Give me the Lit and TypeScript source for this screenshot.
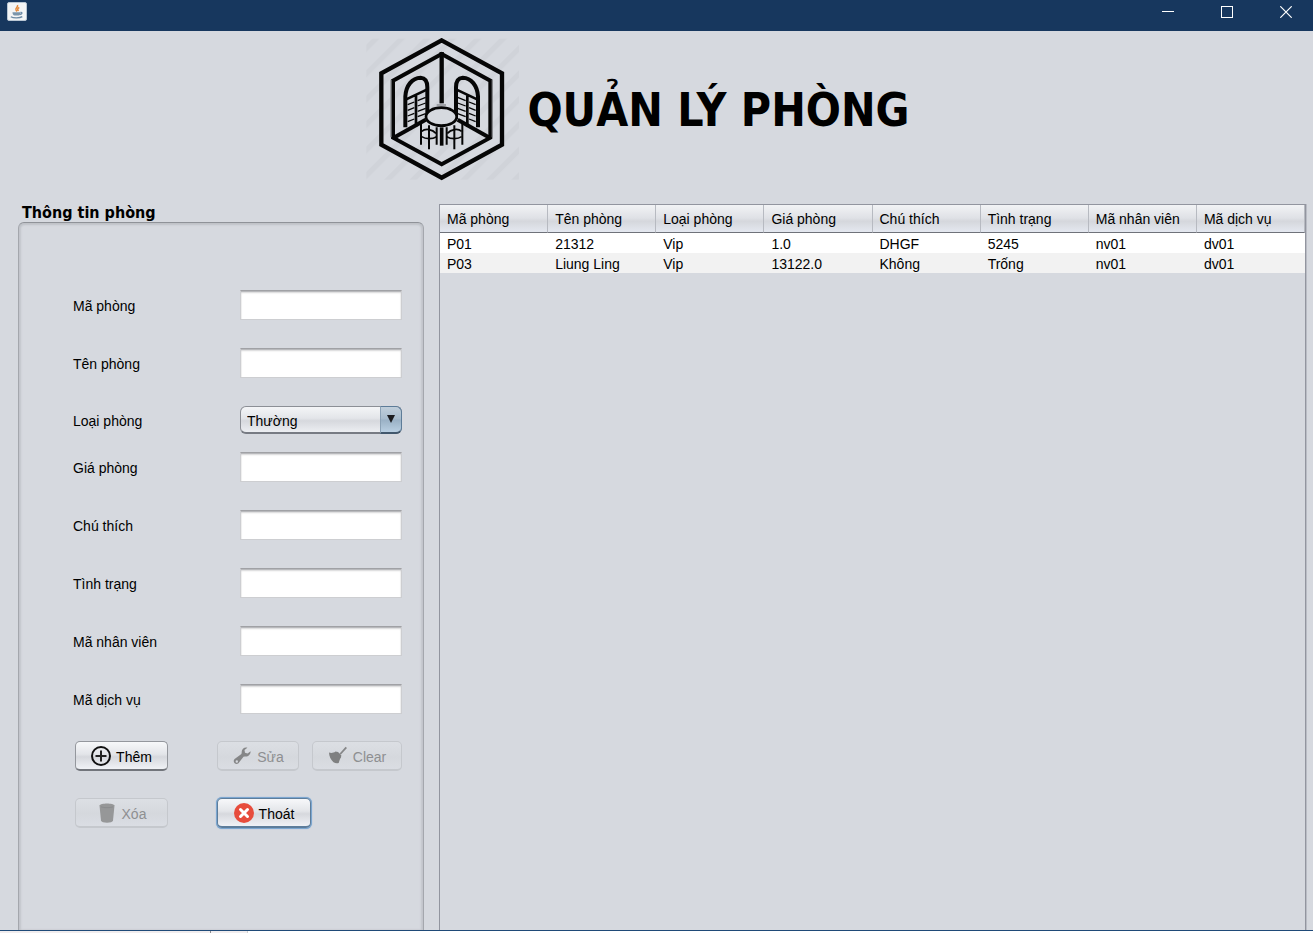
import { LitElement, html, css, svg } from "lit";
import { customElement, state } from "lit/decorators.js";

const FIELDS = [
  { id: "ma-phong", label: "Mã phòng", kind: "text" },
  { id: "ten-phong", label: "Tên phòng", kind: "text" },
  { id: "loai-phong", label: "Loại phòng", kind: "select" },
  { id: "gia-phong", label: "Giá phòng", kind: "text" },
  { id: "chu-thich", label: "Chú thích", kind: "text" },
  { id: "tinh-trang", label: "Tình trạng", kind: "text" },
  { id: "ma-nhan-vien", label: "Mã nhân viên", kind: "text" },
  { id: "ma-dich-vu", label: "Mã dịch vụ", kind: "text" },
];

const ROWS = [
  ["P01", "21312", "Vip", "1.0", "DHGF", "5245", "nv01", "dv01"],
  ["P03", "Liung Ling", "Vip", "13122.0", "Không", "Trống", "nv01", "dv01"],
];

@customElement("title-bar")
class TitleBar extends LitElement {
  static styles = css`
    :host {
      display: flex;
      align-items: flex-start;
      justify-content: space-between;
      height: 31px;
      background: #17375e;
    }
    .app-icon {
      display: block;
      width: 20px;
      height: 20px;
      margin: 2px 0 0 7px;
    }
    .controls {
      display: flex;
      gap: 5px;
    }
    .control {
      display: flex;
      align-items: center;
      justify-content: center;
      width: 54px;
      height: 24px;
      padding: 0;
      border: 0;
      background: none;
    }
    .control svg {
      display: block;
      width: 12px;
      height: 12px;
    }
  `;

  render() {
    return html`
      <svg class="app-icon" viewBox="0 0 20 20" aria-hidden="true">
        <rect x="0.5" y="0.5" width="19" height="18" rx="1.5" fill="#f4f5f6" stroke="#b9c6d3" />
        <path d="M10.500 3c1 2-2.500 3-1.500 5 .4.9 1 1.300 1 1.300M12.300 5.500c-2 1-2 2-.8 3.500" fill="none" stroke="#e58a3c" stroke-width="1.500" />
        <path d="M5.500 10.300h8c0 2-.8 3.200-1.800 3.200H7.500c-1.200 0-2-1.200-2-3.200Z" fill="#7b95ab" />
        <path d="M13.500 10.500c2-.5 2.200 1.500-.8 2.200M3.800 14.800c2.500 1.500 9 1.500 11.500-.2" fill="none" stroke="#6c8aa5" stroke-width="1.300" />
      </svg>
      <div class="controls">
        <button class="control" aria-label="Thu nhỏ">
          <svg viewBox="0 0 12 12"><path d="M0 5.500h12" stroke="#fff" /></svg>
        </button>
        <button class="control" aria-label="Phóng to">
          <svg viewBox="0 0 12 12"><rect x="0.5" y="0.5" width="11" height="11" fill="none" stroke="#fff" /></svg>
        </button>
        <button class="control" aria-label="Đóng">
          <svg viewBox="0 0 12 12"><path d="M.3.3l11.400 11.400M11.700.3L.3 11.700" stroke="#fff" stroke-width="1.200" /></svg>
        </button>
      </div>
    `;
  }
}

@customElement("room-logo")
class RoomLogo extends LitElement {
  static styles = css`
    :host {
      display: block;
    }
    .logo {
      display: block;
      width: 155px;
      height: 143px;
    }
  `;

  private window() {
    return svg`
      <path d="M151 290V197C153 165 171 142 197 141C212 142 217 155 217 170V265" stroke-width="12" />
      <path d="M152 207L217 176M183 190V288" stroke-width="8" />
      <path d="M158 222l20-8M158 239l20-8M158 256l20-8M158 273l20-8M188 210l24-10M188 226l24-9M188 242l24-9M188 258l24-9" stroke-width="4" />
      <path d="M116 321L212 267" stroke-width="12" />
      <path d="M198 272V342M222 284V356M245 290V342" stroke-width="6" />
      <path d="M200 302C212 292 232 296 243 308M200 318C212 326 232 326 245 318" stroke-width="5" />
    `;
  }

  render() {
    return html`
      <svg class="logo" viewBox="30 22 465 429" aria-hidden="true">
        <defs>
          <pattern id="stripes" width="54" height="54" patternUnits="userSpaceOnUse" patternTransform="translate(52 24) rotate(45)">
            <rect width="16" height="54" fill="#d0d3d9" />
          </pattern>
        </defs>
        <rect x="34" y="24" width="458" height="423" fill="url(#stripes)" />
        <g fill="none" stroke="#060606">
          <path d="M260 29L441 128V342L260 441L79 342V128Z" stroke-width="13" />
          <path d="M260 70L406 150V321L260 401L114 321V150Z" stroke-width="12" />
          <path d="M108 147V320M412 147V320" stroke="#85878b" stroke-width="4" />
          <path d="M260 64V218" stroke-width="13" />
          <path d="M260 290V345" stroke-width="11" />
          ${this.window()}
          <g transform="translate(520 0) scale(-1 1)">${this.window()}</g>
          <ellipse cx="259" cy="258" rx="46" ry="27" stroke-width="8" fill="#d6d9df" />
          <path d="M245 223h28" stroke="#85878b" stroke-width="4" />
        </g>
      </svg>
    `;
  }
}

@customElement("room-form")
class RoomForm extends LitElement {
  static styles = css`
    :host {
      display: flex;
      flex-direction: column;
      flex: 0 0 406px;
      font-size: 14px;
      line-height: 20px;
    }
    .legend {
      margin: 0 0 0 4px;
      font: bold 16px/19px "DejaVu Sans Condensed", "Noto Sans", sans-serif;
    }
    .panel {
      box-sizing: border-box;
      flex: 1;
      padding: 67px 21px 0 54px;
      border: 1px solid #a4a7ad;
      border-top-color: #8f9298;
      border-bottom: 0;
      border-radius: 6px 6px 0 0;
      box-shadow: inset 0 2px 2px #bfc2c8, inset 2px 0 2px #c4c7cc, inset -2px 0 2px #c4c7cc;
    }
    .fields {
      display: grid;
      gap: 28px;
    }
    .field {
      display: flex;
      align-items: center;
      justify-content: space-between;
      height: 30px;
    }
    .field.select {
      height: 28px;
      margin-bottom: -10px;
    }
    label {
      padding-top: 2px;
    }
    .box {
      box-sizing: border-box;
      width: 162px;
      height: 30px;
      padding: 0 6px;
      border: 1px solid #cdced1;
      border-top: 1px solid #a0a1a5;
      border-radius: 0;
      outline: 0;
      background: #fff;
      box-shadow: inset 0 1px 1px #b4b5b8, inset 0 2px 2px #dcdcde;
      font: inherit;
    }
    .combo {
      position: relative;
      width: 162px;
      height: 28px;
    }
    .combo select {
      box-sizing: border-box;
      width: 100%;
      height: 28px;
      padding: 2px 26px 0 6px;
      appearance: none;
      border: 1px solid #8c8f96;
      border-bottom: 2px solid #777b83;
      border-radius: 6px;
      background: linear-gradient(#f4f5f7, #e3e5e9 45%, #d6d8dd 55%, #eceef2);
      color: #000;
      font: inherit;
    }
    .arrow {
      position: absolute;
      top: 0;
      right: 0;
      box-sizing: border-box;
      width: 22px;
      height: 28px;
      border: 1px solid #5d7c98;
      border-left-color: #8ba2b6;
      border-bottom: 2px solid #42586d;
      border-radius: 0 6px 6px 0;
      background: linear-gradient(#c1cfdb, #a7bccd 48%, #9ab1c5 52%, #b9cfe2);
      pointer-events: none;
    }
    .arrow svg {
      display: block;
      width: 8px;
      height: 8px;
      margin: 8px 0 0 6px;
    }
    .actions {
      display: grid;
      grid-template-columns: 93px 23px 82px 90px;
      column-gap: 13px;
      row-gap: 27px;
      padding: 27px 0 0 2px;
    }
    .second {
      grid-column: 3;
    }
    button {
      display: flex;
      align-items: center;
      justify-content: center;
      gap: 5px;
      box-sizing: border-box;
      height: 30px;
      padding: 2px 0 0;
      border: 1px solid #94979d;
      border-bottom: 2px solid #72757b;
      border-radius: 5px;
      background: linear-gradient(#f7f8fa, #e3e5e9 45%, #d6d8dd 55%, #f0f2f6);
      color: #000;
      font: inherit;
      white-space: nowrap;
    }
    button svg {
      display: block;
      width: 20px;
      height: 20px;
      margin-top: -2px;
    }
    button:disabled {
      border-color: #c5c8cd;
      background: linear-gradient(#dcdfe4, #d5d8dd 55%, #dadde3);
      color: #8e8f91;
    }
    .exit {
      grid-column: 3;
      width: 94px;
      border-color: #5d7d9b;
      box-shadow: 0 0 0 1px #7ba6d0, 0 0 1px 1px #7ba6d0;
    }
  `;

  @state() private kind = "Thường";

  private control(field: { id: string; kind: string }) {
    if (field.kind === "text") {
      return html`<input class="box" type="text" id=${field.id} />`;
    }
    return html`
      <div class="combo">
        <select id=${field.id} .value=${this.kind} @change=${(e: Event) => (this.kind = (e.target as HTMLSelectElement).value)}>
          <option>Thường</option>
          <option>Vip</option>
        </select>
        <span class="arrow"><svg viewBox="0 0 8 8"><path d="M0 0h8L4 8Z" fill="#1b1d20" /></svg></span>
      </div>
    `;
  }

  render() {
    return html`
      <h2 class="legend">Thông tin phòng</h2>
      <form class="panel" @submit=${(e: Event) => e.preventDefault()}>
        <div class="fields">
          ${FIELDS.map(
            (f) => html`<div class="field ${f.kind}"><label for=${f.id}>${f.label}</label>${this.control(f)}</div>`
          )}
        </div>
        <div class="actions">
          <button type="button">
            <svg viewBox="0 0 20 20"><circle cx="10" cy="10" r="9" fill="none" stroke="#111" stroke-width="2" /><path d="M10 4.500v11M4.500 10h11" stroke="#222" stroke-width="2" /></svg>
            Thêm
          </button>
          <button type="button" class="second" disabled>
            <svg viewBox="0 0 20 20"><path d="M18.600 5.200l-3 2.300-2.600-.8-.5-2.700 2.900-2.300C12.400.8 9.300 3 9.700 6.700L9.400 8 3.300 12.400C1.300 13.600 1.300 16 2.700 17.200c1.600 1.300 3.700.7 4.500-1l4.300-5.400 1.300-.3c3.400.5 6-1.900 5.800-5.300ZM4.800 14.300a1.200 1.200 0 1 1 0 2.400 1.200 1.200 0 0 1 0-2.400Z" fill="#858687" fill-rule="evenodd" /></svg>
            Sửa
          </button>
          <button type="button" disabled>
            <svg viewBox="0 0 20 20"><path d="M18.300 1.300l-6 6.700" stroke="#858687" stroke-width="1.800" /><path d="M1 6.500c2 .8 4.500.5 6.500-1L10 6l3.300 3.200-.3 2.300c-1.500 1.800-1.500 3.500-2.300 5.500-1.700.7-3.700.3-5.200-.8C3 14 1 10.200 1 6.500Z" fill="#7f8081" /></svg>
            Clear
          </button>
          <button type="button" disabled>
            <svg viewBox="0 0 20 20"><path d="M2.500 2.500C3.500-.2 16.500-.2 17.500 2.500L16 17.500c-.5 3-11.500 3-12 0Z" fill="#969798" /><path d="M4 3.800c3 1.200 9 1.200 12 0" fill="none" stroke="#8a8b8d" /></svg>
            Xóa
          </button>
          <button type="button" class="exit">
            <svg viewBox="0 0 20 20"><circle cx="10" cy="10" r="10" fill="#e74c3c" /><path d="M6.500 6.500l7 7M13.500 6.500l-7 7" stroke="#fff" stroke-width="3" stroke-linecap="round" /></svg>
            Thoát
          </button>
        </div>
      </form>
    `;
  }
}

@customElement("room-table")
class RoomTable extends LitElement {
  static styles = css`
    :host {
      display: block;
      box-sizing: border-box;
      flex: 1;
      min-width: 0;
      border: 1px solid #92959f;
      border-bottom: 0;
      box-shadow: 1px 0 0 #b9bcc4;
      font-size: 14px;
    }
    table {
      width: 100%;
      table-layout: fixed;
      border-spacing: 0;
    }
    th,
    td {
      box-sizing: border-box;
      font-weight: normal;
      text-align: left;
      white-space: nowrap;
    }
    th {
      height: 28px;
      padding: 1px 0 0 7px;
      border-right: 1px solid #b7bac1;
      border-bottom: 1px solid #6f727a;
      background: linear-gradient(#f2f3f5, #dfe1e6 48%, #d5d7dc 60%, #e4e8f0);
      line-height: 26px;
    }
    td {
      height: 20px;
      padding: 2px 0 0 7px;
      background: #fff;
      line-height: 18px;
    }
    tr:nth-child(even) td {
      background: #f2f2f2;
    }
  `;

  render() {
    return html`
      <table>
        <thead>
          <tr>${FIELDS.map((f) => html`<th scope="col">${f.label}</th>`)}</tr>
        </thead>
        <tbody>
          ${ROWS.map((row) => html`<tr>${row.map((cell) => html`<td>${cell}</td>`)}</tr>`)}
        </tbody>
      </table>
    `;
  }
}

@customElement("app-root")
class AppRoot extends LitElement {
  static styles = css`
    :host {
      display: flex;
      flex-direction: column;
      min-height: 100vh;
      background: #d6d9df;
      color: #000;
      font-family: "Liberation Sans", Arial, sans-serif;
    }
    .header {
      display: flex;
      align-items: center;
      justify-content: center;
      gap: 7px;
      padding: 7px 38px 0 0;
    }
    h1 {
      margin: 0;
      font: bold 46px/60px "DejaVu Sans Condensed", "Noto Sans", sans-serif;
      white-space: nowrap;
    }
    .content {
      display: flex;
      flex: 1;
      gap: 15px;
      padding: 22px 7px 0 18px;
    }
    .list {
      display: flex;
      flex: 1;
      min-width: 0;
      padding-top: 1px;
    }
    .edge {
      display: flex;
      height: 2px;
      border-top: 1px solid #1f4a78;
      background: #fff;
    }
    .tab {
      width: 210px;
      border-right: 1px solid #8c8c90;
      background: #f1edee;
    }
    .tab.small {
      width: 36px;
      border-right-color: #d0d0d0;
    }
  `;

  render() {
    return html`
      <title-bar></title-bar>
      <header class="header">
        <room-logo></room-logo>
        <h1>QUẢN LÝ PHÒNG</h1>
      </header>
      <main class="content">
        <room-form></room-form>
        <div class="list"><room-table></room-table></div>
      </main>
      <footer class="edge">
        <span class="tab"></span>
        <span class="tab small"></span>
      </footer>
    `;
  }
}
